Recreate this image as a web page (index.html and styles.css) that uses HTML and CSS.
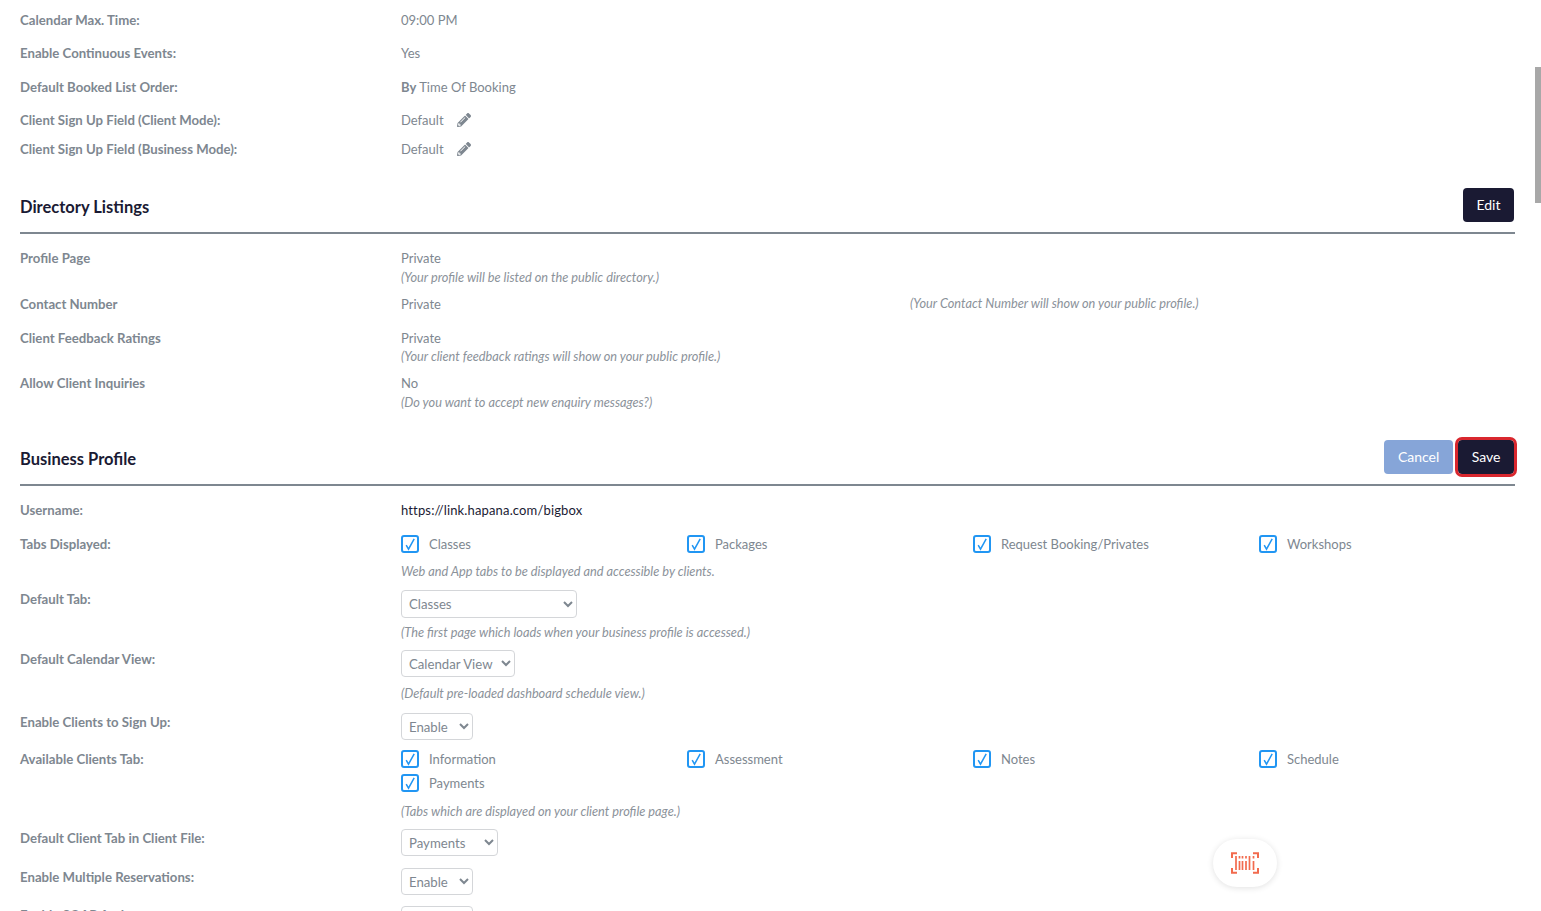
FILE: index.html
```html
<!DOCTYPE html>
<html lang="en">
<head>
    <meta charset="UTF-8">
    <meta name="viewport" content="width=device-width, initial-scale=1.0">
    <title>Business Settings</title>
    <link rel="stylesheet" href="styles.css">
</head>
<body>
    <div class="page">
        <div class="row gap-13"><div class="label">Calendar Max. Time:</div><div class="value">09:00 PM</div></div>
        <div class="row gap-14"><div class="label">Enable Continuous Events:</div><div class="value">Yes</div></div>
        <div class="row gap-13"><div class="label">Default Booked List Order:</div><div class="value"><b>By</b> Time Of Booking</div></div>
        <div class="row gap-9">
            <div class="label">Client Sign Up Field (Client Mode):</div>
            <div class="value with-icon">Default
                <svg class="pencil" viewBox="0 0 512 512"><path d="M497.9 142.1l-46.1 46.1c-4.7 4.7-12.3 4.7-17 0l-111-111c-4.7-4.7-4.7-12.3 0-17l46.1-46.1c18.7-18.7 49.1-18.7 67.9 0l60.1 60.1c18.8 18.7 18.8 49.1 0 67.9zM284.2 99.8L21.6 362.4.4 483.9c-2.9 16.4 11.4 30.6 27.8 27.8l121.5-21.3 262.6-262.6c4.7-4.7 4.7-12.3 0-17l-111-111c-4.8-4.7-12.4-4.7-17.1 0zM124.1 339.9c-5.5-5.5-5.5-14.3 0-19.8l154-154c5.5-5.5 14.3-5.5 19.8 0s5.5 14.3 0 19.8l-154 154c-5.5 5.5-14.3 5.5-19.8 0zM88 424h48v36.3l-64.5 11.3-31.1-31.1L51.7 376H88v48z"/></svg>
            </div>
        </div>
        <div class="row">
            <div class="label">Client Sign Up Field (Business Mode):</div>
            <div class="value with-icon">Default
                <svg class="pencil" viewBox="0 0 512 512"><path d="M497.9 142.1l-46.1 46.1c-4.7 4.7-12.3 4.7-17 0l-111-111c-4.7-4.7-4.7-12.3 0-17l46.1-46.1c18.7-18.7 49.1-18.7 67.9 0l60.1 60.1c18.8 18.7 18.8 49.1 0 67.9zM284.2 99.8L21.6 362.4.4 483.9c-2.9 16.4 11.4 30.6 27.8 27.8l121.5-21.3 262.6-262.6c4.7-4.7 4.7-12.3 0-17l-111-111c-4.8-4.7-12.4-4.7-17.1 0zM124.1 339.9c-5.5-5.5-5.5-14.3 0-19.8l154-154c5.5-5.5 14.3-5.5 19.8 0s5.5 14.3 0 19.8l-154 154c-5.5 5.5-14.3 5.5-19.8 0zM88 424h48v36.3l-64.5 11.3-31.1-31.1L51.7 376H88v48z"/></svg>
            </div>
        </div>

        <div class="section-head">
            <h2>Directory Listings</h2>
            <div class="actions"><button class="btn btn-dark">Edit</button></div>
        </div>

        <div class="row gap-8">
            <div class="label">Profile Page</div>
            <div class="value">Private<div class="note">(Your profile will be listed on the public directory.)</div></div>
        </div>
        <div class="row gap-14">
            <div class="label">Contact Number</div>
            <div class="value split"><span>Private</span><span class="note">(Your Contact Number will show on your public profile.)</span></div>
        </div>
        <div class="row gap-8">
            <div class="label">Client Feedback Ratings</div>
            <div class="value">Private<div class="note note-up">(Your client feedback ratings will show on your public profile.)</div></div>
        </div>
        <div class="row">
            <div class="label">Allow Client Inquiries</div>
            <div class="value">No<div class="note">(Do you want to accept new enquiry messages?)</div></div>
        </div>

        <div class="section-head">
            <h2>Business Profile</h2>
            <div class="actions">
                <button class="btn btn-light">Cancel</button>
                <button class="btn btn-dark btn-focus">Save</button>
            </div>
        </div>

        <div class="row gap-14"><div class="label">Username:</div><div class="value link">https://link.hapana.com/bigbox</div></div>
        <div class="row gap-10">
            <div class="label">Tabs Displayed:</div>
            <div class="value">
                <div class="checks">
                    <label class="check"><span class="box"><svg viewBox="0 0 14 14"><path d="M3.200 8.200l2.300 4L11.200 1.800"/></svg></span>Classes</label>
                    <label class="check"><span class="box"><svg viewBox="0 0 14 14"><path d="M3.200 8.200l2.300 4L11.200 1.800"/></svg></span>Packages</label>
                    <label class="check"><span class="box"><svg viewBox="0 0 14 14"><path d="M3.200 8.200l2.300 4L11.200 1.800"/></svg></span>Request Booking/Privates</label>
                    <label class="check"><span class="box"><svg viewBox="0 0 14 14"><path d="M3.200 8.200l2.300 4L11.200 1.800"/></svg></span>Workshops</label>
                </div>
                <div class="note check-note">Web and App tabs to be displayed and accessible by clients.</div>
            </div>
        </div>
        <div class="row gap-9">
            <div class="label select-label">Default Tab:</div>
            <div class="value">
                <select class="w-176"><option>Classes</option></select>
                <div class="note select-note">(The first page which loads when your business profile is accessed.)</div>
            </div>
        </div>
        <div class="row gap-11">
            <div class="label select-label">Default Calendar View:</div>
            <div class="value">
                <select class="w-114"><option>Calendar View</option></select>
                <div class="note select-note-wide">(Default pre-loaded dashboard schedule view.)</div>
            </div>
        </div>
        <div class="row gap-9">
            <div class="label select-label">Enable Clients to Sign Up:</div>
            <div class="value"><select class="w-72"><option>Enable</option></select></div>
        </div>
        <div class="row gap-9">
            <div class="label">Available Clients Tab:</div>
            <div class="value">
                <div class="checks">
                    <label class="check"><span class="box"><svg viewBox="0 0 14 14"><path d="M3.200 8.200l2.300 4L11.200 1.800"/></svg></span>Information</label>
                    <label class="check"><span class="box"><svg viewBox="0 0 14 14"><path d="M3.200 8.200l2.300 4L11.200 1.800"/></svg></span>Assessment</label>
                    <label class="check"><span class="box"><svg viewBox="0 0 14 14"><path d="M3.200 8.200l2.300 4L11.200 1.800"/></svg></span>Notes</label>
                    <label class="check"><span class="box"><svg viewBox="0 0 14 14"><path d="M3.200 8.200l2.300 4L11.200 1.800"/></svg></span>Schedule</label>
                    <label class="check"><span class="box"><svg viewBox="0 0 14 14"><path d="M3.200 8.200l2.300 4L11.200 1.800"/></svg></span>Payments</label>
                </div>
                <div class="note check-note-wide">(Tabs which are displayed on your client profile page.)</div>
            </div>
        </div>
        <div class="row gap-12">
            <div class="label select-label">Default Client Tab in Client File:</div>
            <div class="value"><select class="w-97"><option>Payments</option></select></div>
        </div>
        <div class="row gap-11">
            <div class="label select-label">Enable Multiple Reservations:</div>
            <div class="value"><select class="w-72"><option>Enable</option></select></div>
        </div>
        <div class="row">
            <div class="label select-label">Enable SOAP Assignments:</div>
            <div class="value"><select class="w-72"><option>Enable</option></select></div>
        </div>
    </div>

    <div class="scroll-thumb"></div>

    <div class="scan-btn">
        <svg viewBox="0 0 28 22" width="28" height="22">
            <path class="corner" d="M1 6V1.200h5M22 1.200h5V6M1 16v4.800h5M22 20.800h5V16"/>
            <path class="bars" d="M5 4v14M8.500 9v9M11.500 9v9M15 9v9M18.500 4v14M22.500 9v9"/>
            <path class="bars" d="M8.500 4v2.500M11.500 4v2.500M15 4v2.500M22.500 4v2.500"/>
        </svg>
    </div>
</body>
</html>
```

FILE: styles.css
```css
html, body {
    height: 100%;
}

body {
    margin: 0;
    background-color: #fff;
    font-family: Lato, "Open Sans", sans-serif;
    font-size: 13px;
    line-height: 20px;
    color: #7e8790;
    overflow: hidden;
}

.page {
    padding: 10px 26px 0 20px;
}

.row {
    display: grid;
    grid-template-columns: 381px 1fr;
}

.gap-8 { margin-bottom: 8px; }
.gap-9 { margin-bottom: 9px; }
.gap-10 { margin-bottom: 10px; }
.gap-11 { margin-bottom: 11px; }
.gap-12 { margin-bottom: 12px; }
.gap-13 { margin-bottom: 13px; }
.gap-14 { margin-bottom: 14px; }

.label {
    font-size: 13.2px;
    font-weight: 700;
    color: #7e8790;
}

.select-label {
    margin-top: -1px;
}

.value b {
    font-weight: 700;
}

.with-icon {
    display: flex;
    align-items: center;
    gap: 13px;
}

.pencil {
    width: 14px;
    height: 14px;
    margin-top: -1px;
    fill: #7e8790;
}

.split {
    display: grid;
    grid-template-columns: 509px 1fr;
}

.note {
    font-size: 12.75px;
    font-style: italic;
    line-height: 18px;
    color: #8b929a;
}

.note-up {
    margin-top: -1px;
}

.link {
    color: #1a1a33;
    letter-spacing: 0.15px;
}

.section-head {
    display: flex;
    align-items: flex-start;
    justify-content: space-between;
    height: 44px;
    margin-top: 29px;
    margin-bottom: 14px;
    border-bottom: 2px solid #7e8790;
}

.section-head h2 {
    margin: 9px 0 0;
    font-size: 16.5px;
    font-weight: 700;
    color: #1a1a33;
}

.actions {
    display: flex;
    gap: 5px;
    padding-right: 1px;
}

.btn {
    height: 34px;
    padding: 0 13.5px 2px;
    border: none;
    border-radius: 4px;
    font-family: inherit;
    font-size: 14px;
    color: #fff;
}

.btn-dark {
    background-color: #1a1a33;
}

.btn-light {
    padding: 0 14px 2px;
    background-color: #86a5d8;
}

.btn-focus {
    outline: 3px solid #d9272e;
    outline-offset: 0;
}

.checks {
    display: grid;
    grid-template-columns: repeat(4, 286px);
    row-gap: 4px;
}

.check {
    display: flex;
    align-items: center;
    gap: 10px;
    height: 20px;
}

.box {
    display: block;
    width: 14px;
    height: 14px;
    border: 2px solid #2196f3;
    border-radius: 3px;
}

.box svg {
    display: block;
    width: 14px;
    height: 14px;
    fill: none;
    stroke: #2196f3;
    stroke-width: 1.5;
}

.check-note {
    margin-top: 8px;
}

.check-note-wide {
    margin-top: 9px;
}

select {
    display: block;
    height: 27px;
    padding: 0 3px;
    border: 1px solid #d4d6d9;
    border-radius: 4px;
    background-color: #fff;
    font-family: inherit;
    font-size: 13.2px;
    color: #7e8790;
}

.w-176 { width: 176px; height: 28px; }
.w-114 { width: 114px; }
.w-97 { width: 97px; }
.w-72 { width: 72px; }

.select-note {
    margin-top: 5px;
}

.select-note-wide {
    margin-top: 7px;
}

.scroll-thumb {
    position: fixed;
    top: 67px;
    right: 0;
    width: 6px;
    height: 136px;
    background-color: #a8a8a8;
}

.scan-btn {
    position: fixed;
    left: 1213px;
    top: 839px;
    width: 64px;
    height: 48px;
    border-radius: 24px;
    background-color: #fff;
    box-shadow: 0 1px 6px rgba(0, 0, 0, 0.12);
    display: flex;
    align-items: center;
    justify-content: center;
}

.scan-btn path {
    fill: none;
    stroke: #f26b4e;
}

.corner {
    stroke-width: 2;
}

.bars {
    stroke-width: 1.700;
}
```
